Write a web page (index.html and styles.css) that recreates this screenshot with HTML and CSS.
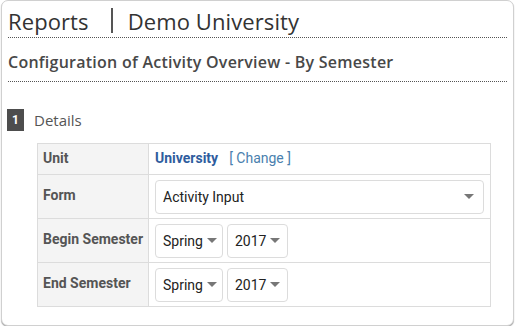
FILE: index.html
```html
<!DOCTYPE html>
<html>
<head>
<title>Configuration of Activity Overview</title>
<link rel="stylesheet" href="styles.css">
</head>
<body>

<div class="card">
    <div class="pageHead">
        <span>Reports</span>
        <span class="headSep"></span>
        <span>Demo University</span>
    </div>

    <div class="subHead">Configuration of Activity Overview - By Semester</div>

    <div class="sectionTitle">
        <div class="stepBadge">1</div>
        <div>Details</div>
    </div>

    <div class="detailTable">
        <div class="row rowUnit">
            <div class="cellLabel">Unit</div>
            <div class="cellValue">
                <span class="unitName">University</span>
                <span class="changeLink">[ Change ]</span>
            </div>
        </div>
        <div class="row">
            <div class="cellLabel">Form</div>
            <div class="cellValue">
                <div class="selectBox wideSelect">
                    <span>Activity Input</span>
                    <span class="caret"></span>
                </div>
            </div>
        </div>
        <div class="row">
            <div class="cellLabel">Begin Semester</div>
            <div class="cellValue">
                <div class="selectBox termSelect">Spring <span class="caret"></span></div>
                <div class="selectBox yearSelect">2017 <span class="caret"></span></div>
            </div>
        </div>
        <div class="row">
            <div class="cellLabel">End Semester</div>
            <div class="cellValue">
                <div class="selectBox termSelect">Spring <span class="caret"></span></div>
                <div class="selectBox yearSelect">2017 <span class="caret"></span></div>
            </div>
        </div>
    </div>
</div>

</body>
</html>
```

FILE: styles.css
```css
body{
    margin:0;
    background:#ffffff;
    font-family:Roboto, "Liberation Sans", sans-serif;
}
.card{
    width:513px;
    height:326px;
    margin-left:1px;
    box-sizing:border-box;
    border:1px solid #d0d0d0;
    border-radius:7px;
    box-shadow:0 1px 1px rgba(0,0,0,0.35);
    padding:0 6px;
    background:#fff;
}
.pageHead{
    height:37px;
    box-sizing:border-box;
    padding-top:3px;
    display:flex;
    align-items:center;
    font-family:"Open Sans", sans-serif;
    font-size:22px;
    letter-spacing:0.1px;
    color:#333;
    border-bottom:1px dotted #555;
}
.headSep{
    width:2px;
    height:25px;
    background:#555;
    margin:0 15px 0 22px;
}
.subHead{
    height:44px;
    box-sizing:border-box;
    padding-top:4px;
    display:flex;
    align-items:center;
    font-family:"Open Sans", sans-serif;
    font-size:16px;
    font-weight:600;
    letter-spacing:0.25px;
    color:#484848;
    border-bottom:1px dotted #555;
}
.sectionTitle{
    display:flex;
    align-items:center;
    gap:10px;
    margin-top:27px;
    font-family:"Open Sans", sans-serif;
    font-size:15px;
    color:#555;
}
.stepBadge{
    width:17px;
    height:22px;
    margin-left:-1px;
    background:#4d4d4d;
    color:#fff;
    font-family:Roboto, sans-serif;
    font-size:12px;
    font-weight:bold;
    display:flex;
    align-items:center;
    justify-content:center;
}
.detailTable{
    width:452px;
    margin:12px 0 0 29px;
    border:1px solid #dcdcdc;
}
.row{
    display:flex;
    height:43px;
    border-top:1px solid #dcdcdc;
}
.row:first-child{
    border-top:none;
}
.rowUnit{
    height:30px;
}
.cellLabel{
    width:111px;
    flex:none;
    box-sizing:border-box;
    background:#f4f4f4;
    border-right:1px solid #dcdcdc;
    padding:0 0 3px 5px;
    display:flex;
    align-items:center;
    font-size:14px;
    font-weight:bold;
    color:#555;
}
.rowUnit .cellLabel{
    padding-bottom:2px;
}
.cellValue{
    flex:1;
    display:flex;
    align-items:center;
    gap:4px;
    padding:0 6px;
}
.rowUnit .cellValue{
    padding-bottom:2px;
    gap:11px;
}
.unitName{
    font-size:14px;
    font-weight:bold;
    color:#2f5d9e;
}
.changeLink{
    font-size:14px;
    color:#4a7fae;
}
.selectBox{
    height:34px;
    box-sizing:border-box;
    border:1px solid #dcdcdc;
    border-radius:4px;
    display:flex;
    align-items:center;
    padding:0 7px;
    font-size:14px;
    color:#222;
}
.wideSelect{
    width:329px;
    justify-content:space-between;
    padding:0 9px 0 7px;
}
.termSelect{
    width:68px;
    gap:4px;
}
.yearSelect{
    width:61px;
    gap:4px;
}
.caret{
    width:0;
    height:0;
    border-left:5px solid transparent;
    border-right:5px solid transparent;
    border-top:5px solid #777;
}
```
